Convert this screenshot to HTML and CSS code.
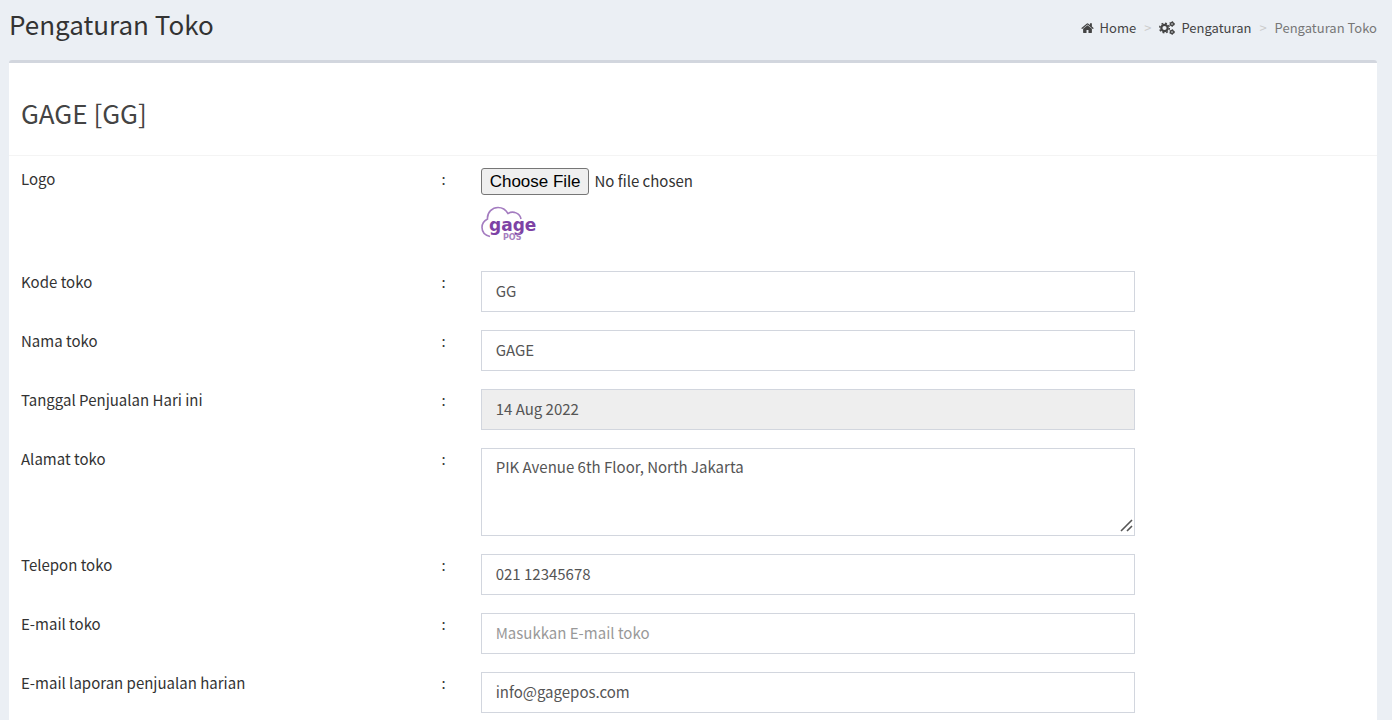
FILE: index.html
```html
<!DOCTYPE html>
<html lang="id">
<head>
<meta charset="utf-8">
<meta name="viewport" content="width=device-width, initial-scale=1">
<title>Pengaturan Toko</title>
<link rel="stylesheet" href="styles.css">
</head>
<body>
<header class="page-header">
  <h1 class="page-title">Pengaturan Toko</h1>
  <nav aria-label="Breadcrumb">
    <ol class="breadcrumb">
      <li><a href="#"><svg class="icon icon-home" viewBox="0 0 1664 1312" aria-hidden="true"><path d="M1408 768v480q0 26-19 45t-45 19H960V928H704v384H320q-26 0-45-19t-19-45V768q0-1 .500-3t.500-3l575-474 575 474q1 2 1 6zm223-69l-62 74q-8 9-21 11h-3q-13 0-21-7L832 200 140 777q-12 8-24 7-13-2-21-11l-62-74q-8-10-7-23.500T37 654l719-599q32-26 76-26t76 26l244 204V64q0-14 9-23t23-9h192q14 0 23 9t9 23v408l219 182q10 8 11 21.500t-7 23.500z"/></svg>Home</a></li>
      <li><a href="#"><svg class="icon icon-gears" viewBox="0 0 32 28" aria-hidden="true">
        <g fill="none" stroke="currentColor">
          <circle cx="11" cy="14" r="6.400" stroke-width="4.400"/>
          <circle cx="11" cy="14" r="9.600" stroke-width="3" stroke-dasharray="3.770 3.770"/>
          <circle cx="26" cy="6" r="3" stroke-width="2.800"/>
          <circle cx="26" cy="6" r="4.800" stroke-width="2" stroke-dasharray="2.510 2.510"/>
          <circle cx="26" cy="22" r="3" stroke-width="2.800"/>
          <circle cx="26" cy="22" r="4.800" stroke-width="2" stroke-dasharray="2.510 2.510"/>
        </g></svg>Pengaturan</a></li>
      <li aria-current="page">Pengaturan Toko</li>
    </ol>
  </nav>
</header>
<main class="box">
  <h2 class="box-title">GAGE [GG]</h2>
  <form class="form">
    <div class="row row-logo">
      <label class="label" for="logo"><span>Logo</span><span>:</span></label>
      <div class="field">
        <input class="file" type="file" id="logo">
        <svg class="logo" viewBox="0 0 57 36" role="img" aria-label="gage POS">
          <path d="M9 30.500C3 29 1 25 1 21.500C1 17 3.500 14.500 6.500 13C6 6 11.500 1.500 17 1.500C21.500 1.500 25 4 27 7.500C32 4.500 39 7 40 13" fill="none" stroke="#a47cc0" stroke-width="1.600"/>
          <text class="logo-name" x="8" y="25">gage</text>
          <text class="logo-sub" x="22" y="34">POS</text>
        </svg>
      </div>
    </div>
    <div class="row">
      <label class="label" for="kode"><span>Kode toko</span><span>:</span></label>
      <div class="field"><input class="control" type="text" id="kode" value="GG"></div>
    </div>
    <div class="row">
      <label class="label" for="nama"><span>Nama toko</span><span>:</span></label>
      <div class="field"><input class="control" type="text" id="nama" value="GAGE"></div>
    </div>
    <div class="row">
      <label class="label" for="tanggal"><span>Tanggal Penjualan Hari ini</span><span>:</span></label>
      <div class="field"><input class="control" type="text" id="tanggal" value="14 Aug 2022" readonly></div>
    </div>
    <div class="row">
      <label class="label" for="alamat"><span>Alamat toko</span><span>:</span></label>
      <div class="field">
        <textarea class="control control-area" id="alamat">PIK Avenue 6th Floor, North Jakarta</textarea>
        <svg class="grip" viewBox="0 0 13 13" aria-hidden="true"><path d="M1 12L12 1M7 12L12 7" fill="none" stroke="#555" stroke-width="1.600"/></svg>
      </div>
    </div>
    <div class="row">
      <label class="label" for="telepon"><span>Telepon toko</span><span>:</span></label>
      <div class="field"><input class="control" type="tel" id="telepon" value="021 12345678"></div>
    </div>
    <div class="row">
      <label class="label" for="email"><span>E-mail toko</span><span>:</span></label>
      <div class="field"><input class="control" type="email" id="email" placeholder="Masukkan E-mail toko"></div>
    </div>
    <div class="row">
      <label class="label" for="laporan"><span>E-mail laporan penjualan harian</span><span>:</span></label>
      <div class="field"><input class="control" type="email" id="laporan" value="info@gagepos.com"></div>
    </div>
  </form>
</main>
</body>
</html>
```
FILE: styles.css
```css
* {
  box-sizing: border-box;
}

html {
  scrollbar-width: none;
}

body {
  margin: 0;
  padding: 0 15px 0 9px;
  background: #ebeff4;
  color: #333;
  font: 15px/22px "Noto Sans CJK SC", "Open Sans", sans-serif;
}

.page-header {
  display: flex;
  justify-content: space-between;
  align-items: center;
  height: 60px;
  padding-bottom: 12px;
}

.page-title,
.box-title {
  margin: 0;
  font-size: 26px;
  line-height: 32px;
  font-weight: 400;
}

.breadcrumb {
  display: flex;
  margin: 0;
  padding: 8px 0 0;
  list-style: none;
  font-size: 13px;
  line-height: 20px;
  color: #777;
}

.breadcrumb li + li::before {
  content: ">";
  padding: 0 8px;
  color: #ccc;
}

.breadcrumb a {
  color: #444;
  text-decoration: none;
}

.icon {
  margin-right: 6px;
  fill: currentColor;
}

.icon-home {
  width: 13px;
  height: 10px;
  vertical-align: 0;
}

.icon-gears {
  width: 16px;
  height: 14px;
  vertical-align: -2px;
}

.box {
  border-top: 3px solid #d2d6de;
  border-radius: 3px;
  background: #fff;
}

.box-title {
  padding: 34px 12px 26px;
  border-bottom: 1px solid #f4f4f4;
  color: #444;
}

.form {
  display: flex;
  flex-direction: column;
  gap: 18px;
  padding: 12px 12px 24px;
}

.row {
  display: grid;
  grid-template-columns: repeat(12, minmax(0, 1fr));
  column-gap: 35px;
  align-items: start;
}

.row-logo {
  padding-bottom: 11px;
}

.label {
  grid-column: span 4;
  display: flex;
  justify-content: space-between;
}

.field {
  position: relative;
  grid-column: span 6;
  display: flex;
  flex-direction: column;
}

.control {
  width: 100%;
  height: 41px;
  padding: 7px 14px 10px;
  border: 1px solid #d2d6de;
  border-radius: 0;
  background: #fff;
  color: #555;
  font: inherit;
}

.control:read-only {
  background: #eee;
}

.control::placeholder {
  color: #999;
}

.control-area {
  display: block;
  height: 88px;
  resize: vertical;
}

.control-area::-webkit-resizer {
  background: transparent;
}

.grip {
  position: absolute;
  right: 2px;
  bottom: 4px;
  width: 13px;
  height: 13px;
  pointer-events: none;
}

.file {
  height: 27px;
  color: #333;
  font: inherit;
}

.file::file-selector-button {
  height: 27px;
  margin-right: 5px;
  padding: 1px 8px;
  border: 1px solid #767676;
  border-radius: 3px;
  background: #efefef;
  color: #000;
  font: 17px "Liberation Sans", Arial, sans-serif;
}

.logo {
  width: 57px;
  height: 36px;
  margin-top: 11px;
}

.logo-name {
  fill: #7d42a5;
  font: bold 17px "DejaVu Sans", sans-serif;
}

.logo-sub {
  fill: #a67fc0;
  font: bold 8px "DejaVu Sans", sans-serif;
}
```
